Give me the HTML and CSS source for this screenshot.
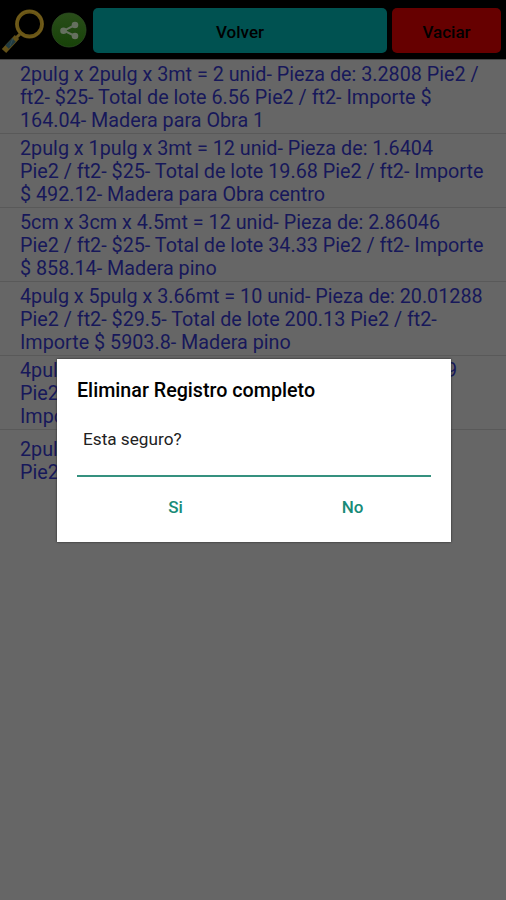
FILE: index.html
```html
<!DOCTYPE html>
<html lang="es">
<head>
<meta charset="utf-8">
<title>Registros</title>
<link rel="stylesheet" href="styles.css">
</head>
<body>
<header class="toolbar">
  <svg class="search" viewBox="0 0 48 58" aria-hidden="true">
    <path d="M20 33L15 38" stroke="#695721" stroke-width="3"/>
    <path d="M17 36L4 50" stroke="#625018" stroke-width="6"/>
    <path d="M14 39L7 46" stroke="#203a40" stroke-width="5"/>
    <path d="M13 37L10 45" stroke="#344d52" stroke-width="1"/>
    <circle cx="29.5" cy="23" r="12.5" fill="none" stroke="#695515" stroke-width="3.8"/>
    <circle cx="29.5" cy="23" r="13.3" fill="none" stroke="#75601f" stroke-width=".8"/>
  </svg>
  <svg class="share" viewBox="0 0 36 36" aria-hidden="true">
    <defs><linearGradient id="g" x1="0" y1="0" x2="0" y2="1"><stop stop-color="#294d19"/><stop offset="1" stop-color="#174208"/></linearGradient></defs>
    <circle cx="18" cy="18" r="17" fill="url(#g)" stroke="#2d4b23" stroke-width=".8"/>
    <path d="M24 13L13 18.7L24 24" fill="none" stroke="#65705f" stroke-width="2"/>
    <g fill="#65705f"><circle cx="24" cy="13" r="3.3"/><circle cx="12.5" cy="18.7" r="3.3"/><circle cx="24" cy="24" r="3.3"/></g>
  </svg>
  <button class="btn back">Volver</button>
  <button class="btn clear">Vaciar</button>
</header>
<main class="list">
  <div class="row">2pulg x 2pulg x 3mt = 2 unid- Pieza de: 3.2808 Pie2 /<br>ft2- $25- Total de lote 6.56 Pie2 / ft2- Importe $<br>164.04- Madera para Obra 1</div>
  <div class="row">2pulg x 1pulg x 3mt = 12 unid- Pieza de: 1.6404<br>Pie2 / ft2- $25- Total de lote 19.68 Pie2 / ft2- Importe<br>$ 492.12- Madera para Obra centro</div>
  <div class="row">5cm x 3cm x 4.5mt = 12 unid- Pieza de: 2.86046<br>Pie2 / ft2- $25- Total de lote 34.33 Pie2 / ft2- Importe<br>$ 858.14- Madera pino</div>
  <div class="row">4pulg x 5pulg x 3.66mt = 10 unid- Pieza de: 20.01288<br>Pie2 / ft2- $29.5- Total de lote 200.13 Pie2 / ft2-<br>Importe $ 5903.8- Madera pino</div>
  <div class="row"><div class="split"><span>4pulg</span><span>9</span></div>Pie2<br>Impo</div>
  <div class="row last">2pulg<br>Pie2</div>
</main>
<section class="dialog" role="dialog">
  <h1 class="title">Eliminar Registro completo</h1>
  <p class="message">Esta seguro?</p>
  <div class="actions"><button class="action">Si</button><button class="action">No</button></div>
</section>
</body>
</html>
```
FILE: styles.css
```css
* { box-sizing: border-box; }
body { margin: 0; height: 900px; overflow: hidden; background: #666; font-family: Roboto, sans-serif; }
button { border: 0; padding: 0; background: none; font-family: inherit; }
.toolbar { display: flex; height: 60px; background: #000; align-items: center; padding-right: 5px; border-bottom: 1px solid #444; }
.search { width: 48px; height: 58px; flex: none; }
.share { width: 36px; height: 36px; margin: 0 6.5px 0 2.5px; flex: none; }
.btn { height: 45px; margin-top: 1px; border-radius: 5px; color: #000; font-size: 17px; font-weight: 500; padding-top: 3px; }
.back { flex: 1; background: #005251; }
.clear { width: 109px; margin-left: 5px; background: #600; }
.row { height: 74px; padding: 4px 20px 0; border-bottom: 1px solid #595959; color: #17185a; font-size: 19.75px; line-height: 22.8px; white-space: nowrap; }
.last { padding-top: 9px; border: 0; }
.split { display: flex; justify-content: space-between; width: 437px; }
.dialog { position: absolute; left: 57px; top: 359px; width: 394px; height: 183px; padding: 20px 20px 0; background: #fff; box-shadow: 0 0 2px #222; }
.title { margin: 0; font-size: 19.7px; line-height: 24px; font-weight: 500; color: #000; white-space: nowrap; }
.message { margin: 24px 0 0; height: 50px; padding-left: 6px; border-bottom: 2px solid #35917f; font-size: 17.2px; line-height: 24px; color: #222; }
.actions { display: grid; grid-template-columns: 1fr 1fr; margin: 18px -10px 0 10px; }
.action { height: 24px; font-size: 17px; font-weight: 500; color: #198b78; }
```
